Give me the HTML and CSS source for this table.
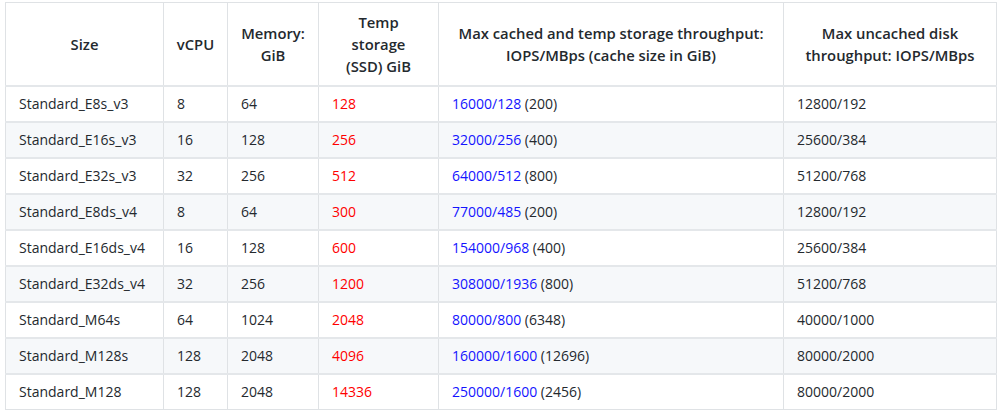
FILE: index.html
```html
<!DOCTYPE html>
<html>
<head>
<meta charset="utf-8">
<link rel="stylesheet" href="styles.css">
</head>
<body>
<table class="spec">
  <colgroup>
    <col class="c1"><col class="c2"><col class="c3"><col class="c4"><col class="c5"><col class="c6">
  </colgroup>
  <thead>
    <tr>
      <th>Size</th>
      <th>vCPU</th>
      <th>Memory:<br>GiB</th>
      <th>Temp<br>storage<br>(SSD) GiB</th>
      <th>Max cached and temp storage throughput:<br>IOPS/MBps (cache size in GiB)</th>
      <th>Max uncached disk<br>throughput: IOPS/MBps</th>
    </tr>
  </thead>
  <tbody>
    <tr><td>Standard_E8s_v3</td><td>8</td><td>64</td><td class="red">128</td><td><span class="blue">16000/128</span> (200)</td><td>12800/192</td></tr>
    <tr><td>Standard_E16s_v3</td><td>16</td><td>128</td><td class="red">256</td><td><span class="blue">32000/256</span> (400)</td><td>25600/384</td></tr>
    <tr><td>Standard_E32s_v3</td><td>32</td><td>256</td><td class="red">512</td><td><span class="blue">64000/512</span> (800)</td><td>51200/768</td></tr>
    <tr><td>Standard_E8ds_v4</td><td>8</td><td>64</td><td class="red">300</td><td><span class="blue">77000/485</span> (200)</td><td>12800/192</td></tr>
    <tr><td>Standard_E16ds_v4</td><td>16</td><td>128</td><td class="red">600</td><td><span class="blue">154000/968</span> (400)</td><td>25600/384</td></tr>
    <tr><td>Standard_E32ds_v4</td><td>32</td><td>256</td><td class="red">1200</td><td><span class="blue">308000/1936</span> (800)</td><td>51200/768</td></tr>
    <tr><td>Standard_M64s</td><td>64</td><td>1024</td><td class="red">2048</td><td><span class="blue">80000/800</span> (6348)</td><td>40000/1000</td></tr>
    <tr><td>Standard_M128s</td><td>128</td><td>2048</td><td class="red">4096</td><td><span class="blue">160000/1600</span> (12696)</td><td>80000/2000</td></tr>
    <tr><td>Standard_M128</td><td>128</td><td>2048</td><td class="red">14336</td><td><span class="blue">250000/1600</span> (2456)</td><td>80000/2000</td></tr>
  </tbody>
</table>
</body>
</html>
```
FILE: styles.css
```css
html, body {
  margin: 0;
  background: #fff;
}
body {
  padding: 2px 0 0 5px;
  font-family: "Open Sans", "Noto Sans", sans-serif;
  font-size: 14px;
  color: #24292e;
}
.spec {
  border-collapse: collapse;
  table-layout: fixed;
  width: 991px;
}
.c1 { width: 158px; }
.c2 { width: 64px; }
.c3 { width: 91px; }
.c4 { width: 120px; }
.c5 { width: 345px; }
.c6 { width: 213px; }
.spec th, .spec td {
  border: 1px solid #dfe2e5;
  padding: 6px 13px;
  line-height: 22px;
}
.spec th {
  font-size: 14.8px;
  font-weight: 600;
  text-align: center;
  vertical-align: middle;
  padding: 8px 10px;
}
.spec td {
  text-align: left;
  white-space: nowrap;
}
.spec tbody tr {
  border-top: 2px solid #e4e7ea;
}
.spec tbody tr:nth-child(2n) {
  background: #f6f8fa;
}
.red { color: #ff0000; }
.blue { color: #1414ff; }
```
